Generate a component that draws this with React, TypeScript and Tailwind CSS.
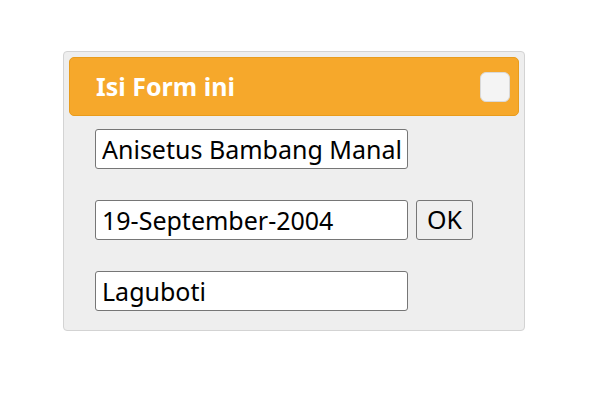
import React from 'react';

const field =
  'w-[313px] h-[40px] bg-white border border-[#767676] rounded-[3px] px-[6px] text-[25px] text-black outline-none';

export default function App() {
  return (
    <div className="w-[598px] h-[404px] bg-white pt-[51px] pl-[63px]" style={{ fontFamily: '"Noto Sans", sans-serif' }}>
      <div className="w-[462px] bg-[#eeeeee] border border-[#d3d3d3] rounded-[4px] p-[5px] pb-[19px]">
        <div className="h-[59px] bg-[#f6a82b] border border-[#e99c1c] rounded-[5px] flex items-center justify-between pl-[26px] pr-[8px]">
          <span className="text-white font-bold text-[25px]">Isi Form ini</span>
          <div className="w-[30px] h-[30px] bg-[#f4f4f4] border border-[#d9d9d9] rounded-[6px]" />
        </div>
        <div className="pl-[26px] pt-[13px] flex flex-col gap-[31px]">
          <input className={field} defaultValue="Anisetus Bambang Manalu" />
          <div className="flex gap-[8px]">
            <input className={field} defaultValue="19-September-2004" />
            <button className="w-[57px] h-[40px] bg-[#efefef] border border-[#767676] rounded-[3px] text-[25px] text-black">
              OK
            </button>
          </div>
          <input className={field} defaultValue="Laguboti" />
        </div>
      </div>
    </div>
  );
}
